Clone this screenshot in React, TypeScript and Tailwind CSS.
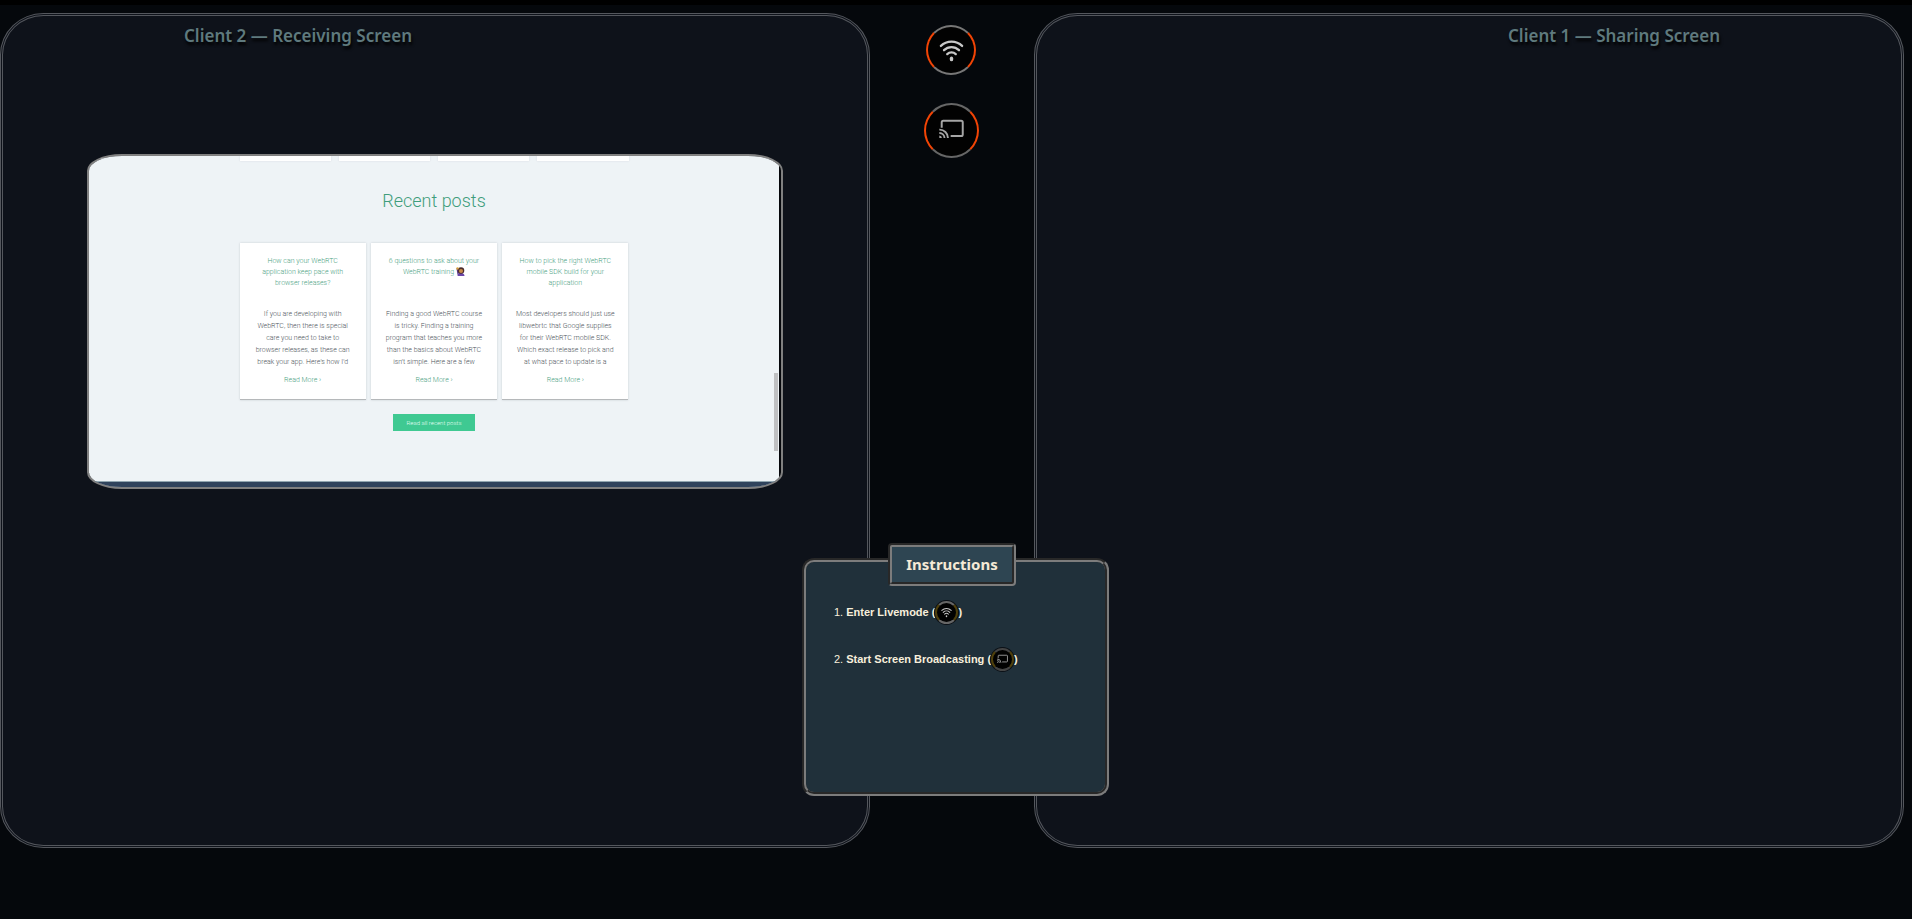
import { useId } from "react";

type Post = { title: string[]; emoji?: boolean; body: string[] };

const posts: Post[] = [
  {
    title: ["How can your WebRTC", "application keep pace with", "browser releases?"],
    body: ["If you are developing with", "WebRTC, then there is special", "care you need to take to", "browser releases, as these can", "break your app. Here's how I'd"],
  },
  {
    title: ["6 questions to ask about your", "WebRTC training"],
    emoji: true,
    body: ["Finding a good WebRTC course", "is tricky. Finding a training", "program that teaches you more", "than the basics about WebRTC", "isn't simple. Here are a few"],
  },
  {
    title: ["How to pick the right WebRTC", "mobile SDK build for your", "application"],
    body: ["Most developers should just use", "libwebrtc that Google supplies", "for their WebRTC mobile SDK.", "Which exact release to pick and", "at what pace to update is a"],
  },
];

function WifiIcon({ className }: { className: string }) {
  return (
    <svg viewBox="0 0 24 24" className={className} fill="none" stroke="currentColor" strokeWidth="2.2" strokeLinecap="round" aria-hidden="true">
      <path d="M1.8 7.6a14.6 14.6 0 0 1 20.4 0" />
      <path d="M4.8 11.7a10.4 10.4 0 0 1 14.4 0" />
      <path d="M7.9 15.5a6 6 0 0 1 8.2 0" />
      <path d="M12 19.4v1.4" strokeWidth="3.2" />
    </svg>
  );
}

function CastIcon({ className }: { className: string }) {
  return (
    <svg viewBox="0 0 24 24" className={className} fill="none" stroke="currentColor" strokeWidth="1.9" aria-hidden="true">
      <path d="M2.6 9.4V4.2a1.5 1.5 0 0 1 1.5-1.5h17.2a1.5 1.5 0 0 1 1.5 1.5v11.6a1.5 1.5 0 0 1-1.5 1.5H11.2" />
      <path d="M.3 11.2a8 8 0 0 1 8.3 8M.3 14.4a5 5 0 0 1 5 4.8" strokeWidth="1.8" />
      <path d="M.3 16.8v2.4h2.5a2.5 2.5 0 0 0-2.5-2.4z" fill="currentColor" stroke="none" />
    </svg>
  );
}

function RaisedHand() {
  return (
    <svg viewBox="0 0 18 18" className="ml-0.5 inline-block size-[9px] align-[-2px]" role="img" aria-label="person raising hand">
      <path d="M3 18c0-5 3-6 6-6s8 1 8 6z" fill="#6a45a8" />
      <path d="M1 3l3-1 2 10-3 4z" fill="#5c3a8c" />
      <circle cx="10" cy="7" r="6.5" fill="#4b2c2c" />
      <circle cx="10" cy="8" r="4" fill="#c98b4a" />
      <circle cx="3" cy="3" r="2.4" fill="#d6a03c" />
    </svg>
  );
}

function PostCard({ post }: { post: Post }) {
  return (
    <article className="flex h-[157px] flex-1 flex-col items-center border-b border-[#b5b8ba] bg-white pt-[13px] text-center shadow-[0_0_2px_#c8ccd0]">
      <h3 className="h-[52px] text-[7px] leading-[11px] font-light text-[#4ba283]">
        {post.title.map((line, i) => (
          <span key={line} className="block whitespace-nowrap">
            {line}
            {post.emoji && i === post.title.length - 1 ? <RaisedHand /> : null}
          </span>
        ))}
      </h3>
      <p className="h-[62px] text-[7px] leading-[12px] font-light text-[#4d555c]">
        {post.body.map((line) => (
          <span key={line} className="block whitespace-nowrap">{line}</span>
        ))}
      </p>
      <a href="#post" className="mt-1 text-[7px] leading-[12px] font-light text-[#4ba283]">Read More ›</a>
    </article>
  );
}

function SharedPage() {
  return (
    <div className="mt-[107px] flex h-[335px] w-[696px] max-w-full self-center overflow-hidden rounded-[5%] border-2 border-[#808080] bg-[#05070b] pr-[2px] font-[Roboto,sans-serif]">
      <div className="flex flex-1 flex-col bg-[#eef3f6]">
        <div className="flex flex-1">
          <div className="flex flex-1 flex-col items-center pl-[5px]">
            <div className="flex w-[389px] gap-2">
              {[0, 1, 2, 3].map((n) => (
                <div key={n} className="h-[5px] flex-1 bg-white shadow-[0_0_2px_#d3d6e0]" />
              ))}
            </div>
            <h2 className="mt-[28px] text-[18px] leading-[24px] font-light text-[#3f9d7c]">Recent posts</h2>
            <div className="mt-[30px] flex w-[389px] gap-[5px]">
              {posts.map((post) => (
                <PostCard key={post.title[0]} post={post} />
              ))}
            </div>
            <button type="button" className="mt-[14px] h-[17px] w-[82px] bg-[#3fc992] text-[6px] leading-[17px] font-light text-[#e5fff4]">
              Read all recent posts
            </button>
          </div>
          <div className="w-[5px] pt-[217px]">
            <div className="h-[78px] w-1 bg-[#bfc0c2]" />
          </div>
        </div>
        <div className="h-[6px] border-t border-[#91a6b0] bg-[#30435c]" />
      </div>
    </div>
  );
}

const panel = "flex min-h-[835px] flex-1 flex-col rounded-[5%] border-3 border-double border-[#54575d] bg-[#0e121a]";
const heading = "mt-[9px] text-[17px] leading-[22px] font-semibold text-[#5f7a7e] [text-shadow:1px_3px_3px_#000]";

export default function App() {
  const titleId = useId();
  return (
    <div className="min-h-screen border-t-[5px] border-black bg-[#05080c] font-['Noto_Sans',sans-serif]">
      <main className="relative flex pt-2 pr-2">
        <section className={panel}>
          <h1 className={heading + " pl-[181px]"}>Client 2 — Receiving Screen</h1>
          <SharedPage />
        </section>

        <div className="flex w-[164px] flex-col items-center pt-3 pr-0.5">
          <button type="button" aria-label="Enter Livemode" className="flex size-[50px] items-center justify-center rounded-full border-2 border-x-[#f24405] border-y-[#777] bg-[#020202] text-[#c8c8c8]">
            <WifiIcon className="size-[25px]" />
          </button>
          <button type="button" aria-label="Start Screen Broadcasting" className="mt-7 flex size-[55px] items-center justify-center rounded-full border-2 border-x-[#f24405] border-y-[#666] bg-[#020202] text-[#a5a5a5]">
            <CastIcon className="size-[25px]" />
          </button>
        </div>

        <section className={panel}>
          <h1 className={heading + " pl-[471px]"}>Client 1 — Sharing Screen</h1>
        </section>

        <aside aria-labelledby={titleId} className="absolute top-[553px] left-[802px] flex h-[238px] w-[307px] flex-col rounded-xl border-4 border-[#7c7c7c] bg-[#20303a] [border-style:groove]">
          <h2 id={titleId} className="-mt-[19px] ml-[82px] flex h-[43px] w-[128px] items-center justify-center rounded-sm border-4 border-[#7c7c7c] bg-[#2e4552] pb-0.5 text-[15px] leading-5 font-bold text-[#f5ead6] [border-style:groove]">
            Instructions
          </h2>
          <ol className="mt-[13px] flex flex-col gap-[21px] pl-7 font-['Liberation_Sans',sans-serif] text-[11px] font-bold text-[#f8efdc]">
            <li className="flex h-[26px] items-center">
              <span className="mr-[3px] font-normal">1.</span>
              Enter Livemode (
              <span className="flex size-[23px] items-center justify-center rounded-full border-2 border-x-[#4f400c] border-y-[#666] bg-[#020202] text-[#c8c8c8] shadow-[0_0_0_1px_#0b1016]">
                <WifiIcon className="size-[11px]" />
              </span>
              )
            </li>
            <li className="flex h-[26px] items-center">
              <span className="mr-[3px] font-normal">2.</span>
              Start Screen Broadcasting (
              <span className="flex size-[23px] items-center justify-center rounded-full border-2 border-x-[#4f400c] border-y-[#444] bg-[#020202] text-[#a5a5a5] shadow-[0_0_0_1px_#0b1016]">
                <CastIcon className="size-[11px]" />
              </span>
              )
            </li>
          </ol>
        </aside>
      </main>
    </div>
  );
}
